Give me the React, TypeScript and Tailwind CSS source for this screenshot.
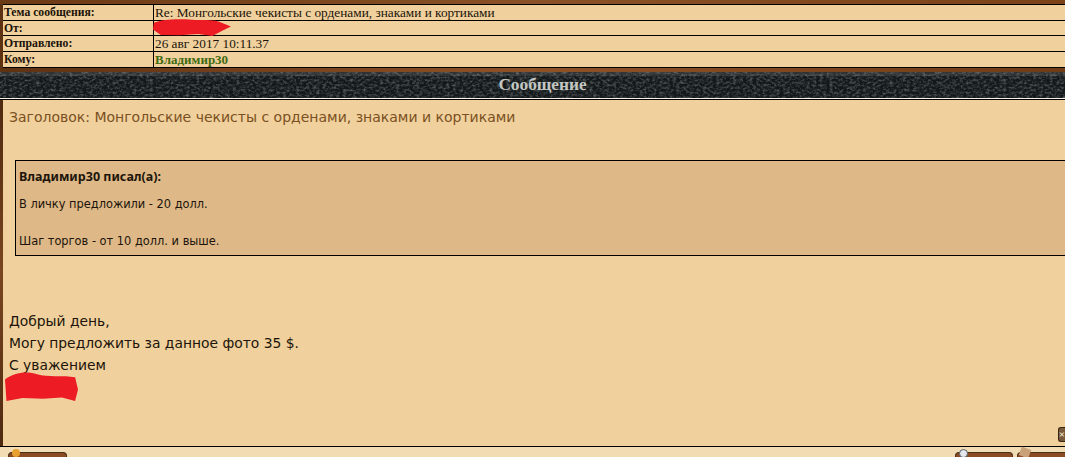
// App.tsx
const rows = [
  { label: 'Тема сообщения:', value: 'Re: Монгольские чекисты с орденами, знаками и кортиками', h: 'h-[15px]' },
  { label: 'От:', value: '', h: 'h-[14px]' },
  { label: 'Отправлено:', value: '26 авг 2017 10:11.37', h: 'h-[15px]' },
  { label: 'Кому:', value: 'Владимир30', h: 'h-[15px]', link: true },
];

function DarkTexture() {
  return (
    <svg className="absolute inset-0 h-full w-full" aria-hidden="true">
      <filter id="stone" x="0" y="0" width="100%" height="100%">
        <feTurbulence type="fractalNoise" baseFrequency="0.3 0.4" numOctaves="4" seed="11" />
        <feColorMatrix values="0 0 0 0 0.42  0 0 0 0 0.45  0 0 0 0 0.45  0.9 0 0 0 -0.36" />
      </filter>
      <rect width="100%" height="100%" fill="#13181a" />
      <rect width="100%" height="100%" filter="url(#stone)" />
      <rect width="100%" height="4" fill="#9a9d98" opacity="0.2" />
    </svg>
  );
}

function Scribble({ className, d }: { className: string; d: string }) {
  return (
    <svg className={className} viewBox="0 0 100 100" preserveAspectRatio="none" aria-hidden="true">
      <path d={d} fill="#ed1c24" />
    </svg>
  );
}

function WoodButton({ className, children }: { className: string; children?: React.ReactNode }) {
  return (
    <div className={`relative h-[5px] rounded-t-[4px] border border-b-0 border-[#4a3018] bg-[#8a4a22] ${className}`}>
      {children}
    </div>
  );
}

export default function App() {
  return (
    <div className="flex h-[457px] w-[1065px] flex-col overflow-hidden bg-[#f0d09c] font-['Liberation_Serif',serif]">
      <div className="h-1 bg-gradient-to-r from-[#6b3a16] via-[#8a5226] to-[#7a4318]" />

      <div className="relative flex">
        <div className="w-[3px] bg-[#5d3213]" />
        <div className="flex-1 border-t border-black">
          {rows.map((row) => (
            <div key={row.label} className={`flex ${row.h} box-content border-b border-black`}>
              <div className="w-[151px] border-r border-black pl-[1px] text-[11.7px] leading-[15px] font-bold text-[#1a1208]">
                {row.label}
              </div>
              <div
                className={`pl-[1px] text-[13.3px] leading-[15px] ${
                  row.link ? 'text-[13px] font-bold text-[#3f6a12]' : 'text-[#20140a]'
                }`}
              >
                {row.value}
              </div>
            </div>
          ))}
        </div>
        <Scribble
          className="absolute top-[15px] left-[153px] h-[17px] w-[78px]"
          d="M1 22 C12 2 30 -2 50 4 C64 8 74 2 84 14 L100 44 L90 66 L76 100 L58 88 L34 96 L10 94 L0 62 Z"
        />
      </div>

      <div className="h-[4px] bg-gradient-to-r from-[#5d3213] via-[#8f5227] to-[#6f3c17]" />

      <div className="relative flex h-[26px] items-center justify-center pl-[20px]">
        <DarkTexture />
        <span className="relative text-[17.3px] font-bold text-[#c3c6c1]">Сообщение</span>
      </div>
      <div className="h-px bg-[#f4f0e6]" />
      <div className="h-px bg-black" />

      <div className="relative flex flex-1 border-b border-black">
        <div className="w-[3px] bg-gradient-to-b from-[#4f2a10] via-[#7a4520] to-[#4f2a10]" />
        <div className="flex-1 pt-[8px] font-['DejaVu_Sans',sans-serif]">
          <div className="pl-[6px] text-[14px] leading-[18px] text-[#7a5023]">
            Заголовок: Монгольские чекисты с орденами, знаками и кортиками
          </div>

          <div className="mt-[34px] ml-[12px] h-[96px] border border-r-0 border-black bg-[#deb887] pt-[8px] pl-[3px] text-[11.4px] text-[#20140a]">
            <div className="font-['Noto_Sans',sans-serif] text-[12.5px] leading-[16px] font-bold">Владимир30 писал(а):</div>
            <div className="mt-[11px] leading-[16px]">В личку предложили - 20 долл.</div>
            <div className="mt-[21px] leading-[16px]">Шаг торгов - от 10 долл. и выше.</div>
          </div>

          <div className="mt-[54px] pl-[6px] text-[13.85px] leading-[22px] text-[#20140a]">
            <div>Добрый день,</div>
            <div>Могу предложить за данное фото 35 $.</div>
            <div>С уважением</div>
          </div>
        </div>
        <Scribble
          className="absolute top-[272px] left-[5px] h-[29px] w-[73px]"
          d="M0 26 C12 2 30 -4 44 8 C58 18 80 12 96 18 L100 60 L96 100 L78 88 L52 92 L24 90 L2 100 Z"
        />
        <div className="absolute right-0 bottom-[4px] flex h-[15px] w-[7px] items-center justify-center rounded-l-[3px] border border-r-0 border-[#3a2412] bg-[#7a5a3c] text-[11px] leading-none font-bold text-[#f7ead4]">
          ×
        </div>
      </div>

      <div className="flex h-[10px] items-end justify-between bg-[#f2dcb4]">
        <WoodButton className="ml-[8px] w-[59px]">
          <div className="absolute top-[-4px] left-[3px] h-[8px] w-[8px] rounded-full bg-[#e8a030]" />
        </WoodButton>
        <div className="flex gap-[4px]">
          <WoodButton className="w-[58px]">
            <div className="absolute top-[-4px] left-[3px] h-[9px] w-[9px] rounded-full border border-[#55606a] bg-[#e4e8ec]" />
          </WoodButton>
          <WoodButton className="w-[48px] rounded-tr-none border-r-0">
            <div className="absolute top-[-5px] left-[2px] h-[9px] w-[10px] rotate-[20deg] bg-[#c9a27a]" />
          </WoodButton>
        </div>
      </div>
    </div>
  );
}
